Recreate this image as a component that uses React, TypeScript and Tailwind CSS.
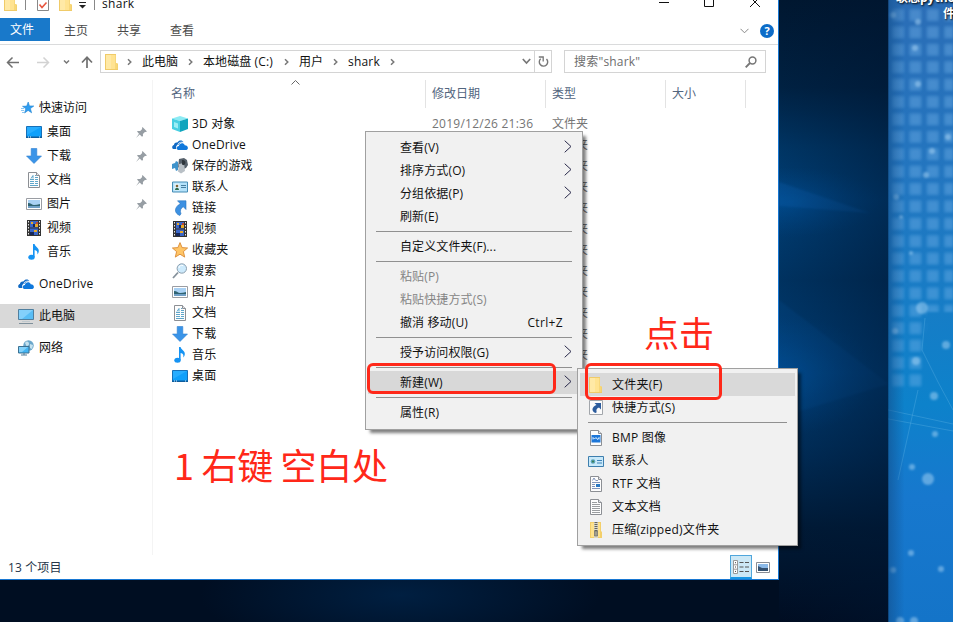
import type { ReactNode } from "react";

type IconName =
  | "folder" | "desktop" | "download" | "document" | "picture" | "video" | "music"
  | "onedrive" | "pc" | "network" | "star" | "cube" | "games" | "contact" | "link"
  | "favorite" | "search" | "shortcut" | "bmp" | "contactFile" | "rtf" | "txt" | "zip";

const page = (
  <>
    <path d="M2.5.5h8l3 3v12h-11z" fill="#fdfdfd" stroke="#8c8f94" />
    <path d="M10.5.5v3h3" fill="#dfe3e8" stroke="#8c8f94" />
  </>
);

const icons: Record<IconName, ReactNode> = {
  folder: (
    <>
      <path d="M1 0h11v9l2 1v6H1z" fill="#f0cb69" />
      <path d="M2 1h9.500v14H2z" fill="#ffe391" />
      <path d="M2 1h5v14H2z" fill="#ffe9a6" />
      <path d="M12 9h1.500v6H11z" fill="#f8d777" />
    </>
  ),
  desktop: (
    <>
      <path d="M.5 2.5h15v11H.5z" fill="#0fa0fb" stroke="#1670b8" />
      <path d="M1 3h14L1 11z" fill="#27adff" />
      <path d="M0 12.5h16V14H0z" fill="#0e5c9c" />
      <path d="M2 13h1M4 13h1M13 13h1" stroke="#d8f0ff" />
    </>
  ),
  download: <path d="M5.200 .5h5.600V8h4.700L8 15.500.5 8h4.700z" fill="#3a94e8" stroke="#2f7fd0" strokeWidth=".6" />,
  document: (
    <>
      {page}
      <path d="M5 6.500L7 3.500v3M9 3.500h1M9 5.500h3M4 7.500h4M9 7.500h3M4 9.500h4M9 9.500h3M4 11.500h4M9 11.500h3M4 13.500h8" fill="none" stroke="#4d9cc4" strokeWidth=".9" />
    </>
  ),
  picture: (
    <>
      <path d="M.5 2.5h15v11H.5z" fill="#fff" stroke="#9a9da3" />
      <path d="M2 4h12v8H2z" fill="#a9d1f4" />
      <path d="M2 7c3 0 4 2 6 2s4-.5 6-1v2.500H2z" fill="#2f6372" />
      <path d="M2 10h12v2H2z" fill="#6f9fc6" />
    </>
  ),
  video: (
    <>
      <path d="M1 0h14v16H1z" fill="#333" />
      <path d="M2.5 1v15M13.5 1v15" stroke="#e8e8e8" strokeDasharray="1.5 1.5" />
      <path d="M4 1h8v6.5H4zM4 8.500h8V15H4z" fill="#3a66c7" />
      <path d="M5 2h2v2H5zM9 4h3v3H9zM8 10h3v2H8z" fill="#e7a928" />
      <path d="M7 4h2v3H7zM4 12h4v3H4z" fill="#15275a" />
      <path d="M10 2h2v2h-2z" fill="#bf4935" />
    </>
  ),
  music: (
    <>
      <path d="M7 0h1.600c.5 3 4.200 3.500 4.200 6.700 0 1.600-.7 2.900-1.600 3.700.6-2.200 0-3.900-2.600-4.400V13H7z" fill="#1593f3" />
      <ellipse cx="5.500" cy="13.200" rx="3.200" ry="2.500" fill="#1593f3" />
    </>
  ),
  onedrive: (
    <>
      <path d="M1 12c-1.300-1-1.200-3.400 1-4 0-2 1.800-3 3.300-2.400C7 2.800 10.500 3 11.500 5.300c-2.500-.3-4 .9-4.500 2.200C4.700 7.300 3.600 9.500 4.300 12z" fill="#1069c4" />
      <path d="M5.800 7.400c1-2 3.500-2.800 6-2" stroke="#fff" strokeWidth=".8" fill="none" />
      <path d="M6 13c-2-.7-1.700-4 .9-4 .4-3 4.800-3.700 5.800-.7C16 8.300 17 12 14.500 13z" fill="#0f78dc" />
    </>
  ),
  pc: (
    <>
      <path d="M.5 1.500h15v10H.5z" fill="#58bdf5" stroke="#4f7f9f" />
      <path d="M1 2h14L4 11H1z" fill="#83d0fb" />
      <path d="M4 13.500h8" stroke="#c0c9ce" />
      <path d="M1 15.500h14" stroke="#7f909b" />
    </>
  ),
  network: (
    <>
      <circle cx="10.500" cy="5.500" r="5.200" fill="#6ba7cb" />
      <path d="M7 3c2-3 4-1 4 1s-2 1-2 3zM12 4l3 1-1 4-2-1z" fill="#c6e2ef" />
      <path d="M.5 6.500h10.500v6.500H.5z" fill="#43b5f4" stroke="#3c7192" />
      <path d="M1 7h9l-6 5H1z" fill="#83d2fb" />
      <path d="M3 15h6M6 13v2" stroke="#557f99" />
    </>
  ),
  star: (
    <>
      <path d="M8.200 2l1.300 3.900 4.300.1-3.400 2.600 1.200 4.200-3.500-2.400-3.500 2.600 1.200-4.300L2.500 6.300l4.200-.2z" fill="#2f9df0" stroke="#2384d2" strokeWidth=".6" />
      <path d="M1 8.500h3M1 10.500h3M2 12.500h2" stroke="#6db9ee" strokeWidth=".8" />
    </>
  ),
  cube: (
    <>
      <path d="M0 2.500L8 0l8 2.500L8 5z" fill="#8cebf4" />
      <path d="M0 2.500L8 5v11l-8-3z" fill="#47cfe2" />
      <path d="M16 2.500L8 5v11l8-3z" fill="#10a5bd" />
      <path d="M2 6l4 1.500v5L2 11z" fill="#9beef5" />
    </>
  ),
  games: (
    <>
      <path d="M7 1l5-1 3 2 1 5-2 3-5 2-3-3z" fill="#56606a" />
      <path d="M7 6l5-1 1 8-4 2.500-3-2z" fill="#b9c0c6" />
      <path d="M10 2c3 0 4 2 3 4s-3 1-3 0z" fill="#2f363c" />
      <path d="M0 6l3-1 1-2 2 1v8l-2 1-1-3-3 1z" fill="#3f93cb" />
    </>
  ),
  contact: (
    <>
      <path d="M.5 3h15v10H.5z" fill="#b5e2fa" stroke="#458cb5" />
      <path d="M2.500 4.500h5v7h-5z" fill="#e3f4fc" />
      <circle cx="5" cy="7" r="1.300" fill="#7f6337" />
      <path d="M3 11c0-3 4-3 4 0z" fill="#2e6d52" />
      <path d="M9 6.500h5M9 8.500h5" stroke="#477ea0" />
    </>
  ),
  link: <path d="M5.500 .8h8.500v8.700l-2.800-2.800C8.500 8.500 7.800 10.700 9 13.800L7.800 15.500C1.500 13 2.300 7 8.300 3.700z" fill="#3d91e2" stroke="#2a75bf" strokeWidth=".6" />,
  favorite: <path d="M8 .6l2.100 5 5.500.4-4.200 3.600 1.300 5.500L8 12.200l-4.700 2.900 1.300-5.500L.4 6l5.500-.4z" fill="#ffc566" stroke="#d98a35" strokeWidth=".9" />,
  search: (
    <>
      <path d="M1 15l5-5.500" stroke="#85919b" strokeWidth="1.800" />
      <circle cx="9.800" cy="5.500" r="4.700" fill="#cdeafc" stroke="#8b9eae" />
      <path d="M7 5c0-2 2-3 4-2.500" stroke="#fff" fill="none" />
    </>
  ),
  shortcut: (
    <>
      <path d="M1.500.5h13v14h-13z" fill="#fbfbfb" stroke="#a2a6ab" />
      <path d="M6.500 3h6.500v6.500l-2-2c-2.500.8-3 2.500-2.300 4.800L7.500 13C3 11 3.700 7 8.500 5z" fill="#2c5c9d" />
    </>
  ),
  bmp: (
    <>
      {page}
      <path d="M3.500 5h9v7.500h-9z" fill="#1c76d8" />
      <path d="M5 9.500v-2l1.500 1.500L8 7.500l1.500 2 1.500-2v2" stroke="#e0f0ff" fill="none" />
    </>
  ),
  contactFile: (
    <>
      <path d="M.5 3.500h15v10H.5z" fill="#c9e9fa" stroke="#3e7fae" />
      <circle cx="5" cy="8.500" r="2.300" fill="#5aa3b8" />
      <circle cx="5" cy="8.500" r="1" fill="#3b7a4a" />
      <path d="M9 7.500h5M9 10h5" stroke="#3e83b8" />
    </>
  ),
  rtf: (
    <>
      {page}
      <path d="M4.500 4.500L6 2l1.500 2.500M8 4.500h2M4 6.500h8M4 8.500h3M4 10.500h3M4 12.500h8" stroke="#7389b3" fill="none" strokeWidth=".9" />
      <path d="M8 8h4v3H8z" fill="#2b79c4" />
    </>
  ),
  txt: (
    <>
      {page}
      <path d="M4 3.500h5M4 5.500h8M4 7.500h8M4 9.500h8M4 11.500h8M4 13.500h8" stroke="#9a9da0" />
    </>
  ),
  zip: (
    <>
      <path d="M2 0h11v9l1 1v6H2z" fill="#f3cf6a" />
      <path d="M3 1h9v14H3z" fill="#ffe28c" />
      <path d="M6 0h4v16H6z" fill="#dcd8c8" />
      <path d="M8 0v9" stroke="#66645c" strokeWidth="3" strokeDasharray="1 1" />
      <path d="M6.500 9h3v5h-3z" fill="#a19d8e" stroke="#66645c" strokeWidth=".6" />
    </>
  ),
};

function Icon({ name }: { name: IconName }) {
  return (
    <svg className="w-4 h-4 shrink-0" viewBox="0 0 16 16">
      {icons[name]}
    </svg>
  );
}

function Pin() {
  return (
    <svg className="w-[11px] h-[11px]" viewBox="0 0 11 11">
      <path d="M6.500 0L11 4.500l-1.500.6-.6-.1-2 2L7 9l-1 .8L3.700 7.500 0 11l3-4.200L1 4.600l.8-.7 2.400.2 2-2L6 1z" fill="#979ea4" />
    </svg>
  );
}

function Crumb({ children, className }: { children: ReactNode; className: string }) {
  return (
    <div className={`flex items-center shrink-0 ${className}`}>
      <span className="flex-1 whitespace-nowrap">{children}</span>
      <svg className="w-[5px] h-[8px] shrink-0" viewBox="0 0 5 8">
        <path d="M1 1.200L3.800 4 1 6.800" fill="none" stroke="#777" strokeWidth="1.500" />
      </svg>
    </div>
  );
}

const quickAccess: { icon: IconName; label: string; pinned?: boolean }[] = [
  { icon: "desktop", label: "桌面", pinned: true },
  { icon: "download", label: "下载", pinned: true },
  { icon: "document", label: "文档", pinned: true },
  { icon: "picture", label: "图片", pinned: true },
  { icon: "video", label: "视频" },
  { icon: "music", label: "音乐" },
];

const files: { icon: IconName; name: string }[] = [
  { icon: "cube", name: "3D 对象" },
  { icon: "onedrive", name: "OneDrive" },
  { icon: "games", name: "保存的游戏" },
  { icon: "contact", name: "联系人" },
  { icon: "link", name: "链接" },
  { icon: "video", name: "视频" },
  { icon: "favorite", name: "收藏夹" },
  { icon: "search", name: "搜索" },
  { icon: "picture", name: "图片" },
  { icon: "document", name: "文档" },
  { icon: "download", name: "下载" },
  { icon: "music", name: "音乐" },
  { icon: "desktop", name: "桌面" },
];

type MenuEntry = { label: string; sub?: boolean; keys?: string; disabled?: boolean; active?: boolean } | null;

// null is a separator
const menu: MenuEntry[] = [
  { label: "查看(V)", sub: true },
  { label: "排序方式(O)", sub: true },
  { label: "分组依据(P)", sub: true },
  { label: "刷新(E)" },
  null,
  { label: "自定义文件夹(F)..." },
  null,
  { label: "粘贴(P)", disabled: true },
  { label: "粘贴快捷方式(S)", disabled: true },
  { label: "撤消 移动(U)", keys: "Ctrl+Z" },
  null,
  { label: "授予访问权限(G)", sub: true },
  null,
  { label: "新建(W)", sub: true, active: true },
  null,
  { label: "属性(R)" },
];

const newMenu: ({ icon: IconName; label: string; active?: boolean } | null)[] = [
  { icon: "folder", label: "文件夹(F)", active: true },
  { icon: "shortcut", label: "快捷方式(S)" },
  null,
  { icon: "bmp", label: "BMP 图像" },
  { icon: "contactFile", label: "联系人" },
  { icon: "rtf", label: "RTF 文档" },
  { icon: "txt", label: "文本文档" },
  { icon: "zip", label: "压缩(zipped)文件夹" },
];

const sparks = [
  [893, 15, 3], [918, 22, 3], [915, 48, 3], [918, 84, 3], [932, 151, 3], [926, 175, 3],
  [896, 197, 3], [901, 217, 2], [911, 253, 2], [948, 137, 3], [895, 331, 3],
  [916, 361, 4], [946, 345, 4], [934, 396, 4], [935, 434, 3], [912, 467, 3], [928, 479, 6],
  [911, 553, 3], [941, 569, 3], [893, 570, 3], [900, 621, 4], [914, 621, 4], [922, 308, 6],
];

function Wallpaper() {
  return (
    <svg className="absolute inset-0 w-[953px] h-[622px]" viewBox="0 0 953 622">
      <defs>
        <linearGradient id="night" x1="0" y1="0" x2="0" y2="1">
          <stop offset="0" stopColor="#001730" />
          <stop offset=".14" stopColor="#002142" />
          <stop offset=".24" stopColor="#003564" />
          <stop offset=".32" stopColor="#003e75" />
          <stop offset=".45" stopColor="#003260" />
          <stop offset=".6" stopColor="#003c73" />
          <stop offset=".72" stopColor="#002e5a" />
          <stop offset=".85" stopColor="#001a36" />
          <stop offset="1" stopColor="#000d22" />
        </linearGradient>
        <linearGradient id="edge" x1="0" y1="0" x2="1" y2="0">
          <stop offset="0" stopColor="#001530" stopOpacity="0" />
          <stop offset="1" stopColor="#001530" stopOpacity=".45" />
        </linearGradient>
        <linearGradient id="sea" x1="0" y1="0" x2="0" y2="1">
          <stop offset="0" stopColor="#2b6db6" />
          <stop offset=".3" stopColor="#2276c0" />
          <stop offset=".65" stopColor="#0d82cb" />
          <stop offset=".8" stopColor="#1778ce" />
          <stop offset="1" stopColor="#1474c8" />
        </linearGradient>
        <linearGradient id="seaEdge" x1="0" y1="0" x2="1" y2="0">
          <stop offset="0" stopColor="#124f8c" stopOpacity=".6" />
          <stop offset="1" stopColor="#124f8c" stopOpacity="0" />
        </linearGradient>
        <radialGradient id="glow">
          <stop offset="0" stopColor="#0054a0" stopOpacity=".55" />
          <stop offset="1" stopColor="#004a90" stopOpacity="0" />
        </radialGradient>
        <radialGradient id="dim">
          <stop offset="0" stopColor="#003060" stopOpacity=".5" />
          <stop offset="1" stopColor="#003060" stopOpacity="0" />
        </radialGradient>
        <pattern id="cells" x="889" y="6" width="17.400" height="17.400" patternUnits="userSpaceOnUse">
          <rect x="2.500" y="2.500" width="13" height="13" rx="3" fill="#73b4ea" opacity=".26" />
          <rect x="4.500" y="4.500" width="9" height="9" rx="2" fill="#73b4ea" opacity=".18" />
        </pattern>
        <filter id="soft"><feGaussianBlur stdDeviation="1.100" /></filter>
      </defs>
      <path d="M0 0h953v622H0z" fill="url(#night)" />
      <path d="M0 579h779v43H0z" fill="#000e22" />
      <ellipse cx="400" cy="595" rx="200" ry="60" fill="url(#dim)" />
      <ellipse cx="790" cy="202" rx="90" ry="35" fill="url(#glow)" />
      <ellipse cx="785" cy="375" rx="90" ry="60" fill="url(#glow)" />
      <path d="M779 182L870 213L779 206z" fill="#0a5fae" opacity=".3" filter="url(#soft)" />
      <path d="M779 300L889 384L797 412L779 412z" fill="#0a5fae" opacity=".14" filter="url(#soft)" />
      <path d="M779 0h110v622H779z" fill="url(#edge)" />
      <path d="M888.500 0H953v622h-64.500z" fill="url(#sea)" />
      <path d="M889 6h64v306h-26l-3 76h-35z" fill="url(#cells)" filter="url(#soft)" />
      <path d="M888.500 410L953 424M888.500 419L953 431M918 390L898 480M925 318L922 350L938 382L953 410" stroke="#61b5e5" strokeOpacity=".35" fill="none" />
      <g filter="url(#soft)">
        {sparks.map(([x, y, r]) => (
          <circle key={`${x}-${y}`} cx={x} cy={y} r={r} fill="#a9d5f5" opacity=".5" />
        ))}
      </g>
      <path d="M888.500 0h16v622h-16z" fill="url(#seaEdge)" />
    </svg>
  );
}

function TitleBar() {
  return (
    <div className="h-[18px] flex shrink-0">
      <div className="flex flex-1 -mt-[6px] h-[18px] items-center">
        <div className="ml-[3px] flex"><Icon name="folder" /></div>
        <div className="ml-[6px] w-px h-[14px] bg-[#888]" />
        <svg className="ml-[11px] w-[12px] h-[15px]" viewBox="0 0 12 15">
          <path d="M.5.5h11v14H.5z" fill="#fff" stroke="#888" />
          <path d="M2.500 8.500l2.500 3 4.500-5" fill="none" stroke="#e8563f" strokeWidth="1.600" />
        </svg>
        <div className="ml-[9px] flex"><Icon name="folder" /></div>
        <svg className="ml-[5px] mt-[4px] w-[7px] h-[7px]" viewBox="0 0 7 7">
          <path d="M0 .5h7" stroke="#222" />
          <path d="M0 3h7L3.500 6.500z" fill="#222" />
        </svg>
        <div className="ml-[8px] w-px h-[14px] bg-[#888]" />
        <span className="ml-[7px] mt-[2px] text-[12px] tracking-[.3px]">shark</span>
      </div>
      <svg className="w-[104px] h-[9px] mr-[15px]" viewBox="0 0 104 9" fill="none" stroke="#111">
        <path d="M0 2.500h10M45.500-4v10.500h9V-4M91-3l10 10M101-3l-10 10" />
      </svg>
    </div>
  );
}

function AddressBar() {
  return (
    <div className="h-[35px] pb-[2px] flex items-center shrink-0">
      <svg className="w-[100px] h-[24px]" viewBox="0 0 100 24" fill="none">
        <path d="M8 12.500h11M12.500 7.500l-5 5 5 5" stroke="#707070" strokeWidth="1.500" />
        <path d="M37 12.500h11M43.500 7.500l5 5-5 5" stroke="#d2d2d2" strokeWidth="1.500" />
        <path d="M64 10.500l2.500 2.500 2.500-2.500" stroke="#777" strokeWidth="1.500" />
        <path d="M87 18V7.500M82 12.500l5-5.300 5 5.300" stroke="#707070" strokeWidth="1.700" />
      </svg>
      <div className="w-[452px] h-[23px] border border-[#d4d4d4] flex items-center text-[12px] leading-none">
        <div className="ml-[3px] flex"><Icon name="folder" /></div>
        <svg className="ml-[7px] w-[5px] h-[8px]" viewBox="0 0 5 8">
          <path d="M1 1.200L3.800 4 1 6.800" fill="none" stroke="#777" strokeWidth="1.500" />
        </svg>
        <Crumb className="ml-[10px] w-[51px]">此电脑</Crumb>
        <Crumb className="ml-[10px] w-[86px]"><span className="tracking-[.1px]">本地磁盘 (C:)</span></Crumb>
        <Crumb className="ml-[10px] w-[39px]">用户</Crumb>
        <Crumb className="ml-[10px] w-[47px]"><span className="tracking-[.2px]">shark</span></Crumb>
        <svg className="ml-auto mr-[3px] w-[9px] h-[7px]" viewBox="0 0 9 7">
          <path d="M.8 1l3.700 4 3.700-4" fill="none" stroke="#777" strokeWidth="1.700" />
        </svg>
        <div className="w-[17px] h-full border-l border-[#d4d4d4] flex items-center justify-center">
          <svg className="w-[11px] h-[12px]" viewBox="0 0 11 12">
            <path d="M2.700 2.800A4.200 4.200 0 1 0 8.500 3" fill="none" stroke="#777" strokeWidth="1.400" />
            <path d="M.8 1h4.400v4.400" fill="none" stroke="#777" strokeWidth="1.300" />
          </svg>
        </div>
      </div>
      <div className="ml-[12px] w-[202px] h-[23px] border border-[#d4d4d4] flex items-center pl-[9px] pr-[8px] text-[12px] text-[#6d6d6d]">
        <span className="flex-1 tracking-[.2px]">搜索"shark"</span>
        <svg className="w-[12px] h-[12px]" viewBox="0 0 12 12" fill="none" stroke="#777">
          <circle cx="7.500" cy="4.500" r="3.400" strokeWidth="1.500" />
          <path d="M5 7L.7 11.300" strokeWidth="1.900" />
        </svg>
      </div>
    </div>
  );
}

function Sidebar() {
  return (
    <div className="w-[153px] border-r border-[#f4f4f4] pt-[16px] shrink-0">
      <div className="h-6 flex items-center pl-[20px] gap-[3px]">
        <Icon name="star" />快速访问
      </div>
      {quickAccess.map((q) => (
        <div key={q.label} className="h-6 flex items-center pl-[26px] gap-[5px]">
          <Icon name={q.icon} />
          <span className="flex-1">{q.label}</span>
          {q.pinned && <div className="mr-[5px]"><Pin /></div>}
        </div>
      ))}
      <div className="h-6 mt-2 flex items-center pl-[18px] gap-[5px]">
        <Icon name="onedrive" />
        <span className="tracking-[.2px]">OneDrive</span>
      </div>
      <div className="h-6 mt-2 flex items-center pl-[18px] gap-[5px] w-[150px] bg-[#d9d9d9]">
        <Icon name="pc" />此电脑
      </div>
      <div className="h-6 mt-2 flex items-center pl-[18px] gap-[5px]">
        <Icon name="network" />网络
      </div>
    </div>
  );
}

function FileList() {
  return (
    <div className="flex-1">
      <div className="h-[28px] flex text-[#52657e] leading-[27px]">
        <div className="relative w-[273px] pl-[18px] border-r border-[#e3e3e3]">
          名称
          <svg className="absolute left-[138px] top-0 w-[9px] h-[5px]" viewBox="0 0 9 5">
            <path d="M.5 4.500l4-4 4 4" fill="none" stroke="#666" />
          </svg>
        </div>
        <div className="w-[120px] pl-[6px] border-r border-[#e3e3e3]">修改日期</div>
        <div className="w-[120px] pl-[6px] border-r border-[#e3e3e3]">类型</div>
        <div className="w-[80px] pl-[6px] border-r border-[#e3e3e3]">大小</div>
      </div>
      <div className="pt-[5px]">
        {files.map((f) => (
          <div key={f.name} className="h-[21px] flex items-center pl-[19px]">
            <Icon name={f.icon} />
            <span className="w-[244px] pl-[4px] tracking-[.15px]">{f.name}</span>
            <span className="w-[120px] text-[#757575] tracking-[.24px]">2019/12/26 21:36</span>
            <span className="text-[#757575]">文件夹</span>
          </div>
        ))}
      </div>
    </div>
  );
}

function ContextMenu() {
  return (
    <div className="absolute left-[365px] top-[131px] w-[218px] h-[299px] border border-[#a0a0a0] bg-[#f1f1f1] px-[2px] pt-[4px] shadow-[4px_4px_3px_-1px_rgba(0,0,0,0.5)]">
      {menu.map((m, i) =>
        m ? (
          <div key={m.label} className={`h-[23px] flex items-center pl-[32px] pr-[8px] ${m.active ? "bg-[#d8d8d8]" : ""} ${m.disabled ? "text-[#858585]" : ""}`}>
            <span className="flex-1 tracking-[.12px]">{m.label}</span>
            {m.keys && <span className="mr-[9px] tracking-[.35px]">{m.keys}</span>}
            {m.sub && (
              <svg className="w-[8px] h-[13px] mb-[2px]" viewBox="0 0 8 13">
                <path d="M.7.7l6.300 5.800-6.300 5.800" fill="none" stroke="#29294a" />
              </svg>
            )}
          </div>
        ) : (
          <div key={i} className="h-[7px] px-[8px] pt-[3px]">
            <div className="h-px bg-[#909090]" />
          </div>
        )
      )}
    </div>
  );
}

function NewSubmenu() {
  return (
    <div className="absolute left-[577px] top-[368px] w-[221px] h-[178px] border border-[#a0a0a0] bg-[#f1f1f1] px-[2px] pt-[4px] shadow-[4px_4px_3px_-1px_rgba(0,0,0,0.5)]">
      {newMenu.map((m, i) =>
        m ? (
          <div key={m.label} className={`h-[23px] flex items-center pl-[8px] gap-[8px] ${m.active ? "bg-[#d9d9d9]" : ""}`}>
            <Icon name={m.icon} />
            <span className="tracking-[.22px]">{m.label}</span>
          </div>
        ) : (
          <div key={i} className="h-[7px] px-[8px] pt-[3px]">
            <div className="h-px bg-[#909090]" />
          </div>
        )
      )}
    </div>
  );
}

export default function App() {
  return (
    <div className="relative w-[953px] h-[622px] overflow-hidden text-[12px] leading-[16px] text-[#111] whitespace-nowrap font-['Open_Sans','Noto_Sans_CJK_SC',sans-serif]">
      <Wallpaper />
      <div className="absolute left-[896px] top-[-10px] w-[66px] text-white font-bold text-right [text-shadow:1px_1px_2px_#000]">
        <div className="text-left">联想python软</div>
        <div className="pr-[7px]">件</div>
      </div>

      {/* Explorer window */}
      <div className="relative w-[779px] h-[580px] bg-white border-r border-b border-[#1877d2] flex flex-col">
        <TitleBar />
        <div className="h-[27px] shrink-0 border-b border-[#dadbdc] flex items-start">
          <div className="w-[50px] h-[23px] bg-[#1979ca] text-white flex items-center justify-center pr-[6px] pt-px">文件</div>
          <div className="h-[25px] flex items-center gap-[29px] pl-[14px] text-[#4a4a4a]">
            <span>主页</span>
            <span>共享</span>
            <span>查看</span>
          </div>
          <div className="ml-auto h-[26px] flex items-center pr-[4px] gap-[11px]">
            <svg className="w-[9px] h-[6px]" viewBox="0 0 9 6">
              <path d="M.5.8l4 4 4-4" fill="none" stroke="#888" />
            </svg>
            <div className="w-[14px] h-[14px] rounded-full bg-[#0c6cc8] text-white text-[11px] leading-[14px] font-bold text-center">?</div>
          </div>
        </div>
        <AddressBar />
        <div className="flex flex-1 min-h-0 overflow-hidden">
          <Sidebar />
          <FileList />
        </div>
        <div className="h-[24px] shrink-0 flex items-center pl-[8px] text-[#26364a]">
          <span className="flex-1 pt-[2px] tracking-[.12px]">13 个项目</span>
          <div className="w-[22px] h-[24px] bg-[#cce8f6] border border-[#4fa6dc] border-b-2 border-b-[#1896e5] flex items-center justify-center">
            <svg className="w-[17px] h-[14px]" viewBox="0 0 17 14">
              <path d="M.5.5h4v13h-4zM.5 4.800h4M.5 9.200h4" fill="#fff" stroke="#999" />
              <path d="M6.500 2.500h10M6.500 7h10M6.500 11.500h10" stroke="#555" strokeDasharray="4 1.500" />
              <path d="M2 2.700h1M2 7h1M2 11.400h1" stroke="#444" />
            </svg>
          </div>
          <svg className="ml-[4px] mr-[8px] w-[14px] h-[11px]" viewBox="0 0 14 11">
            <path d="M.5.5h13v10H.5z" fill="#fff" stroke="#888c94" />
            <path d="M2 2h10v7H2z" fill="#8bb9e8" />
            <path d="M2 4l4 2h6v3H2z" fill="#345170" />
          </svg>
        </div>
      </div>

      <ContextMenu />
      <NewSubmenu />

      {/* Red annotations */}
      <div className="absolute left-[367px] top-[363px] w-[189px] h-[31px] border-[3px] border-[#ff2819] rounded-[6px]" />
      <div className="absolute left-[585px] top-[363px] w-[137px] h-[37px] border-[3px] border-[#ff2819] rounded-[6px]" />
      <div className="absolute left-[174px] top-[444px] text-[36px] leading-[40px] text-[#ff2819] tracking-[-.3px] font-['Noto_Sans_CJK_SC',sans-serif]">1 右键 空白处</div>
      <div className="absolute left-[644px] top-[312px] text-[35px] leading-[40px] text-[#ff2819] font-['Noto_Sans_CJK_SC',sans-serif]">点击</div>
    </div>
  );
}
